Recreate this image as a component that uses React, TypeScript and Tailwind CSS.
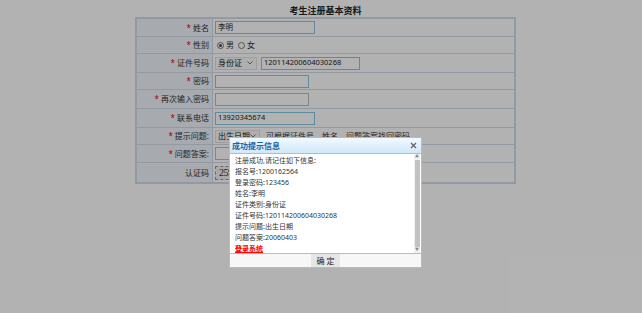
import React from "react";

const F = { fontFamily: '"Noto Sans", "Noto Sans CJK SC", sans-serif' };

function Row({
  label,
  required = true,
  h = "h-[18px]",
  last = false,
  children,
}: {
  label: string;
  required?: boolean;
  h?: string;
  last?: boolean;
  children?: React.ReactNode;
}) {
  return (
    <div className={`grid grid-cols-[76px_1fr] ${h} ${last ? "" : "border-b border-[#d3dcea]"}`}>
      <div className="flex items-center justify-end pr-[3px] bg-[#eff4fb] border-r border-[#d3dcea] text-[8px] text-[#333]">
        {required && <span className="text-[#e00] mr-[2px]">*</span>}
        {label}
      </div>
      <div className="flex items-center pl-[2px] gap-[4px] text-[8px] text-[#333]">{children}</div>
    </div>
  );
}

function Input({ w, value = "", blue = true }: { w: string; value?: string; blue?: boolean }) {
  return (
    <div
      className={`${w} h-[13px] bg-white border ${blue ? "border-[#86c9e3]" : "border-[#bdbdbd]"} flex items-center pl-[2px] text-[7.5px] leading-none text-[#222]`}
    >
      {value}
    </div>
  );
}

function Select({ w, value }: { w: string; value: string }) {
  return (
    <div className={`${w} h-[13px] bg-[#fbfbfb] border border-[#e3e3e3] flex items-center justify-between px-[2px] text-[8px] leading-none text-[#222]`}>
      <span>{value}</span>
      <svg width="6" height="4" viewBox="0 0 6 4" className="mr-[1px]">
        <path d="M0.5 0.5 L3 3 L5.5 0.5" stroke="#555" strokeWidth="0.8" fill="none" />
      </svg>
    </div>
  );
}

export default function App() {
  return (
    <div className="relative w-[642px] h-[313px] bg-white overflow-hidden" style={F}>
      <div className="ml-[135px] w-[381px] pt-[5px]">
        <div className="text-center text-[9px] font-bold leading-[12px] text-[#222]">考生注册基本资料</div>
        <div className="border-2 border-[#d3dcea]">
          <Row label="姓名">
            <Input w="w-[100px]" value="李明" />
          </Row>
          <Row label="性别" h="h-[17px]">
            <div className="flex items-center gap-[2px] ml-[2px]">
              <span className="w-[7px] h-[7px] rounded-full border border-[#777] flex items-center justify-center">
                <span className="w-[3px] h-[3px] rounded-full bg-[#444]" />
              </span>
              <span>男</span>
              <span className="w-[7px] h-[7px] rounded-full border border-[#777] ml-[2px]" />
              <span>女</span>
            </div>
          </Row>
          <Row label="证件号码" h="h-[19px]">
            <Select w="w-[42px]" value="身份证" />
            <Input w="w-[99px]" value="120114200604030268" />
          </Row>
          <Row label="密码" h="h-[17px]">
            <Input w="w-[94px]" />
          </Row>
          <Row label="再次输入密码" h="h-[19px]">
            <Input w="w-[94px]" blue={false} />
          </Row>
          <Row label="联系电话" h="h-[19px]">
            <Input w="w-[100px]" value="13920345674" />
          </Row>
          <Row label="提示问题:" h="h-[17px]">
            <Select w="w-[45px]" value="出生日期" />
            <span className="ml-[2px]">可根据证件号、姓名、问题答案找回密码</span>
          </Row>
          <Row label="问题答案:">
            <Input w="w-[94px]" blue={false} />
          </Row>
          <Row label="认证码" required={false} h="h-[19px]" last>
            <div
              className="w-[40px] h-[14px] border border-dashed border-[#999] bg-[#f2f2f2] flex items-center pl-[3px] text-[10px] leading-none text-[#333] tracking-[-0.5px]"
              style={{ fontFamily: '"Liberation Serif", serif' }}
            >
              2597
            </div>
          </Row>
        </div>
      </div>

      {/* modal mask */}
      <div className="absolute inset-0 bg-black/30" />

      {/* dialog */}
      <div className="absolute left-[229px] top-[137px] w-[193px] h-[131px] border border-[#8ccbe2] bg-white flex flex-col">
        <div className="h-[16px] shrink-0 flex items-center justify-between pl-[2px] pr-[4px] bg-gradient-to-b from-[#f2f9fe] to-[#cfe8f9] border-b border-[#8ccbe2]">
          <span className="text-[8px] font-semibold text-[#1b64a6] leading-none">成功提示信息</span>
          <svg width="7" height="7" viewBox="0 0 7 7">
            <path d="M1 1 L6 6 M6 1 L1 6" stroke="#666" strokeWidth="1.3" />
          </svg>
        </div>
        <div className="flex h-[99px] shrink-0">
          <div className="flex-1 overflow-hidden pl-[5px] pt-[1px] text-[7px] leading-[11px] text-[#333]">
            <div>注册成功,请记住如下信息:</div>
            <div>报名号:1200162564</div>
            <div>登录密码:123456</div>
            <div>姓名:李明</div>
            <div>证件类别:身份证</div>
            <div>证件号码:120114200604030268</div>
            <div>提示问题:出生日期</div>
            <div>问题答案:20060403</div>
            <div>
              <span className="font-bold text-[#f00] underline">登录系统</span>
            </div>
          </div>
          <div className="w-[6px] mr-[1px] flex flex-col bg-[#f0f0f0]">
            <div className="h-[6px] flex items-center justify-center text-[4px] leading-none text-[#888]">▲</div>
            <div className="flex-1 bg-[#c2c2c2] mx-[0.5px]" />
            <div className="h-[6px] flex items-center justify-center text-[4px] leading-none text-[#888]">▼</div>
          </div>
        </div>
        <div className="flex-1 border-t border-[#8ccbe2] bg-[#f7f7f7] flex items-center justify-center">
          <div className="w-[29px] h-[13px] bg-[#e6e6e6] flex items-center justify-center text-[8px] leading-none text-[#222]">
            确 定
          </div>
        </div>
      </div>
    </div>
  );
}
